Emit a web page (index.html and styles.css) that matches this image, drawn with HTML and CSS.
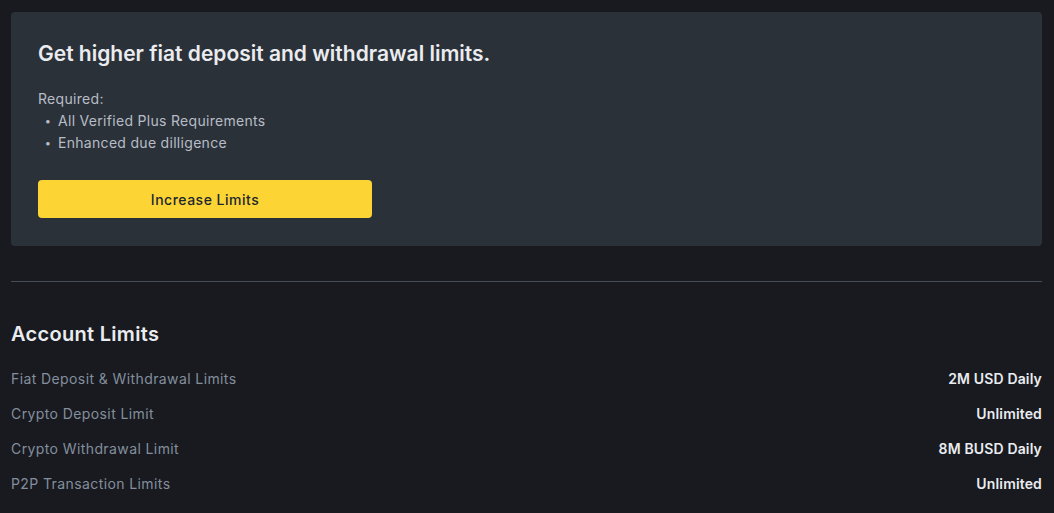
FILE: index.html
```html
<!DOCTYPE html>
<html lang="en">
  <head>
    <meta charset="UTF-8" />
    <meta name="viewport" content="width=device-width, initial-scale=1.0" />
    <title>Limits</title>
    <link rel="stylesheet" href="styles.css">
  </head>
  <body>
    <div class="page">
      <!-- upgrade card -->
      <div class="upgrade-card">
        <h2 class="upgrade-title">Get higher fiat deposit and withdrawal limits.</h2>
        <div class="required">
          <div class="required-label">Required:</div>
          <ul class="required-list">
            <li>All Verified Plus Requirements</li>
            <li>Enhanced due dilligence</li>
          </ul>
        </div>
        <button class="increase-button">Increase Limits</button>
      </div>

      <div class="divider"></div>

      <!-- account limits -->
      <h2 class="limits-title">Account Limits</h2>
      <div class="limits-list">
        <div class="limit-row">
          <span class="limit-label">Fiat Deposit &amp; Withdrawal Limits</span>
          <span class="limit-value">2M USD Daily</span>
        </div>
        <div class="limit-row">
          <span class="limit-label">Crypto Deposit Limit</span>
          <span class="limit-value">Unlimited</span>
        </div>
        <div class="limit-row">
          <span class="limit-label">Crypto Withdrawal Limit</span>
          <span class="limit-value">8M BUSD Daily</span>
        </div>
        <div class="limit-row">
          <span class="limit-label">P2P Transaction Limits</span>
          <span class="limit-value">Unlimited</span>
        </div>
      </div>
    </div>
  </body>
</html>
```

FILE: styles.css
```css
body {
  margin: 0;
  background-color: #181a20;
  font-family: Inter, "Noto Sans", Arial, sans-serif;
  color: #eaecef;
}
.page {
  padding: 12px 12px 0 11px;
}
.upgrade-card {
  background-color: #2b3139;
  border-radius: 4px;
  padding: 28px 27px 28px;
}
.upgrade-title {
  margin: 0;
  font-size: 21px;
  line-height: 28px;
  font-weight: 600;
  color: #eaecef;
}
.required {
  margin-top: 20px;
  font-size: 14px;
  line-height: 22px;
  letter-spacing: 0.3px;
  color: #b7bdc6;
}
.required-list {
  margin: 0;
  padding: 0;
  list-style: none;
}
.required-list li {
  height: 22px;
}
.required-list li::before {
  content: "•";
  display: inline-block;
  vertical-align: top;
  width: 20px;
  text-align: center;
  font-size: 11px;
}
.increase-button {
  margin-top: 26px;
  width: 334px;
  height: 38px;
  border: none;
  border-radius: 4px;
  background-color: #fcd535;
  color: #202630;
  font-family: inherit;
  font-size: 14px;
  font-weight: 500;
  letter-spacing: 0.5px;
  cursor: pointer;
}
.divider {
  margin-top: 35px;
  height: 1px;
  background-color: #474d57;
}
.limits-title {
  margin: 38px 0 13px;
  font-size: 20px;
  line-height: 28px;
  font-weight: 600;
  letter-spacing: 0.3px;
}
.limit-row {
  display: flex;
  justify-content: space-between;
  padding: 7px 0;
  font-size: 14px;
  line-height: 21px;
}
.limit-label {
  color: #848e9c;
  letter-spacing: 0.4px;
}
.limit-value {
  font-weight: 600;
  color: #eaecef;
  letter-spacing: 0.15px;
}
```
